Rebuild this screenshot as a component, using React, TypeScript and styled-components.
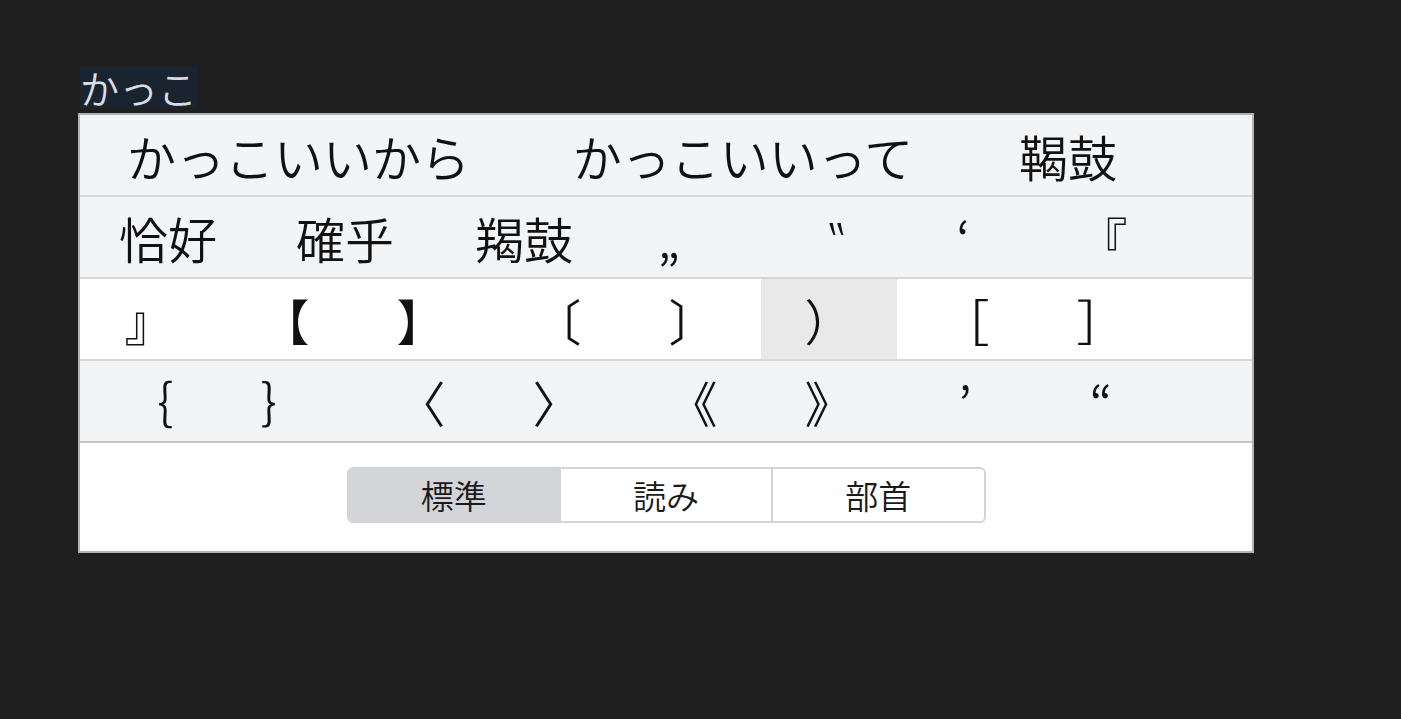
import styled, { createGlobalStyle } from "styled-components"

const GlobalStyle = createGlobalStyle`
	html, body {
		margin: 0;
		padding: 0;
		background: #1f1f1f;
	}
	body {
		font-family: "Noto Sans CJK JP", "Noto Sans", sans-serif;
	}
`

const Page = styled.div`
	min-height: 719px;
	padding: 67px 0 0 78px;
	box-sizing: border-box;
	display: flex;
	flex-direction: column;
	align-items: flex-start;
	gap: 5px;
`

const Composition = styled.span`
	margin-left: 2px;
	height: 41px;
	display: flex;
	align-items: center;
	background: #1a2430;
	color: #d9dde2;
	font-size: 39px;
	font-weight: 350;
	line-height: 41px;
`

const Panel = styled.div`
	width: 1172px;
	border: 2px solid #b3b3b3;
	background: #ffffff;
	display: flex;
	flex-direction: column;
	font-weight: 350;
`

const Row = styled.div<{ $shade?: boolean; $last?: boolean }>`
	height: 80px;
	padding-left: 1px;
	display: flex;
	background: ${(p) => (p.$shade ? "#f3f4f6" : "#ffffff")};
	border-bottom: 2px solid ${(p) => (p.$last ? "#c4c4c4" : "#d6d7d9")};
`

const Cell = styled.div<{ $w: number; $active?: boolean }>`
	flex: 0 0 ${(p) => p.$w}px;
	display: flex;
	align-items: center;
	justify-content: center;
	font-size: 49px;
	line-height: 1;
	color: #111111;
	white-space: nowrap;
	background: ${(p) => (p.$active ? "#e9e9ea" : "transparent")};
`

const Footer = styled.div`
	height: 108px;
	display: flex;
	align-items: center;
	justify-content: center;
	padding-bottom: 4px;
	box-sizing: border-box;
`

const Segmented = styled.div`
	display: flex;
	width: 639px;
	height: 56px;
	box-sizing: border-box;
	border: 2px solid #d3d4d6;
	border-radius: 6px;
	overflow: hidden;
	background: #ffffff;
`

const Segment = styled.div<{ $selected?: boolean }>`
	flex: 1;
	display: flex;
	align-items: center;
	justify-content: center;
	font-size: 33px;
	color: #1a1a1a;
	background: ${(p) => (p.$selected ? "#d4d5d8" : "#ffffff")};

	& + & {
		border-left: 2px solid #d3d4d6;
	}
`

type Cand = { text: string; w: number; active?: boolean }

const rows: { shade: boolean; items: Cand[] }[] = [
	{
		shade: true,
		items: [
			{ text: "かっこいいから", w: 435 },
			{ text: "かっこいいって", w: 454 },
			{ text: "鞨鼓", w: 196 },
		],
	},
	{
		shade: true,
		items: [
			{ text: "恰好", w: 174 },
			{ text: "確乎", w: 180 },
			{ text: "羯鼓", w: 178 },
			{ text: "„", w: 112 },
			{ text: "‟", w: 223 },
			{ text: "‘", w: 30 },
			{ text: "『", w: 250 },
		],
	},
	{
		shade: false,
		items: [
			{ text: "』", w: 136 },
			{ text: "【", w: 136 },
			{ text: "】", w: 136 },
			{ text: "〔", w: 136 },
			{ text: "〕", w: 136 },
			{ text: "）", w: 136, active: true },
			{ text: "［", w: 136 },
			{ text: "］", w: 136 },
		],
	},
	{
		shade: true,
		items: [
			{ text: "｛", w: 136 },
			{ text: "｝", w: 136 },
			{ text: "〈", w: 136 },
			{ text: "〉", w: 136 },
			{ text: "《", w: 136 },
			{ text: "》", w: 136 },
			{ text: "’", w: 136 },
			{ text: "“", w: 136 },
		],
	},
]

const modes = ["標準", "読み", "部首"]

const App = () => {
	return (
		<Page lang="ja">
			<GlobalStyle />
			<Composition>かっこ</Composition>
			<Panel>
				{rows.map((row, i) => (
					<Row key={i} $shade={row.shade} $last={i === rows.length - 1}>
						{row.items.map((c, j) => (
							<Cell key={j} $w={c.w} $active={c.active}>
								{c.text}
							</Cell>
						))}
					</Row>
				))}
				<Footer>
					<Segmented>
						{modes.map((m, i) => (
							<Segment key={m} $selected={i === 0}>
								{m}
							</Segment>
						))}
					</Segmented>
				</Footer>
			</Panel>
		</Page>
	)
}

export default App
